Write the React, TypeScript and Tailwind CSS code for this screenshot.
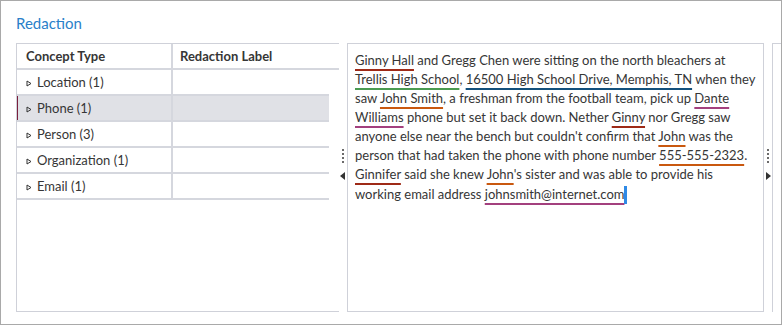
const rows = [
  { label: "Location (1)" },
  { label: "Phone (1)", selected: true },
  { label: "Person (3)" },
  { label: "Organization (1)" },
  { label: "Email (1)" },
];

const colors: Record<string, string> = {
  person: "decoration-[#9e2a17]",
  org: "decoration-[#4b9b52]",
  loc: "decoration-[#13507c]",
  phone: "decoration-[#c9580f]",
  email: "decoration-[#a3407e]",
};

function Mark({ kind, children }: { kind: string; children: React.ReactNode }) {
  return (
    <span className={`underline decoration-2 underline-offset-[4px] ${colors[kind]}`}>{children}</span>
  );
}

function Caret() {
  return (
    <svg width="6" height="7" viewBox="0 0 6 7" className="shrink-0">
      <path d="M1 1 L5 3.5 L1 6 Z" fill="none" stroke="#333" strokeWidth="1" />
    </svg>
  );
}

function Splitter({ dir }: { dir: "left" | "right" }) {
  return (
    <div className="w-2 flex flex-col items-center pt-[106px] gap-[9px]">
      <div className="flex flex-col gap-[2px]">
        {[0, 1, 2, 3].map((i) => (
          <div key={i} className="w-[2px] h-[2px] bg-[#6b6b6b]" />
        ))}
      </div>
      <svg width="6" height="8" viewBox="0 0 6 8">
        {dir === "left" ? (
          <path d="M5 0 L0 4 L5 8 Z" fill="#333" />
        ) : (
          <path d="M1 0 L6 4 L1 8 Z" fill="#333" />
        )}
      </svg>
    </div>
  );
}

export default function App() {
  return (
    <div
      className="w-[782px] h-[325px] border border-[#a9a9a9] bg-white text-[#363636] overflow-hidden"
      style={{ fontFamily: "Lato, 'Open Sans', sans-serif" }}
    >
      <div className="pl-[15px] pt-[11px] h-[42px] text-[15px] text-[#2a7fc9]">Redaction</div>
      <div className="flex h-[269px] pl-[15px]">
        {/* concept table */}
        <div className="w-[323px] border-l border-t border-b border-[#cfd1d9] flex flex-col text-[13px]">
          <div className="flex h-[26px] border-b-[2px] border-[#d5d7de] font-bold">
            <div className="w-[156px] border-r-[2px] border-[#d5d7de] pl-[9px] pt-[2px] flex items-center">Concept Type</div>
            <div className="pl-[7px] pt-[2px] flex items-center">Redaction Label</div>
          </div>
          {rows.map((r) => (
            <div
              key={r.label}
              className={`flex w-[312px] h-[26px] border-b-[2px] border-[#d5d7de] ${
                r.selected ? "bg-[#e0e1e6]" : ""
              }`}
            >
              <div
                className={`w-[156px] border-r-[2px] border-[#d5d7de] pt-[2px] flex items-center gap-[5px] ${
                  r.selected ? "border-l border-l-[#7a1f3d] pl-[8px]" : "pl-[9px]"
                }`}
              >
                <Caret />
                <span>{r.label}</span>
              </div>
              <div className="flex-1" />
            </div>
          ))}
        </div>
        <Splitter dir="left" />
        {/* text panel */}
        <div className="w-[417px] border border-[#cfd1d9] px-[7px] pt-[7px] text-[13px] leading-[19px] whitespace-nowrap">
          <div>
            <Mark kind="person">Ginny Hall</Mark> and Gregg Chen were sitting on the north bleachers at
          </div>
          <div>
            <Mark kind="org">Trellis High School</Mark>,{" "}
            <Mark kind="loc">16500 High School Drive, Memphis, TN</Mark> when they
          </div>
          <div>
            saw <Mark kind="phone">John Smith</Mark>, a freshman from the football team, pick up{" "}
            <Mark kind="email">Dante</Mark>
          </div>
          <div>
            <Mark kind="email">Williams</Mark> phone but set it back down. Nether{" "}
            <Mark kind="person">Ginny</Mark> nor Gregg saw
          </div>
          <div>
            anyone else near the bench but couldn't confirm that <Mark kind="phone">John</Mark> was the
          </div>
          <div>
            person that had taken the phone with phone number <Mark kind="phone">555-555-2323</Mark>.
          </div>
          <div>
            <Mark kind="person">Ginnifer</Mark> said she knew <Mark kind="phone">John</Mark>'s sister and was
            able to provide his
          </div>
          <div className="flex items-center">
            <span>
              working email address <Mark kind="email">johnsmith@internet.com</Mark>
            </span>
            <span className="w-[3px] h-[18px] bg-[#2f8ae6] mt-[2px]" />
          </div>
        </div>
        <Splitter dir="right" />
        <div className="flex-1 border-l border-t border-[#cfd1d9]" />
      </div>
    </div>
  );
}
